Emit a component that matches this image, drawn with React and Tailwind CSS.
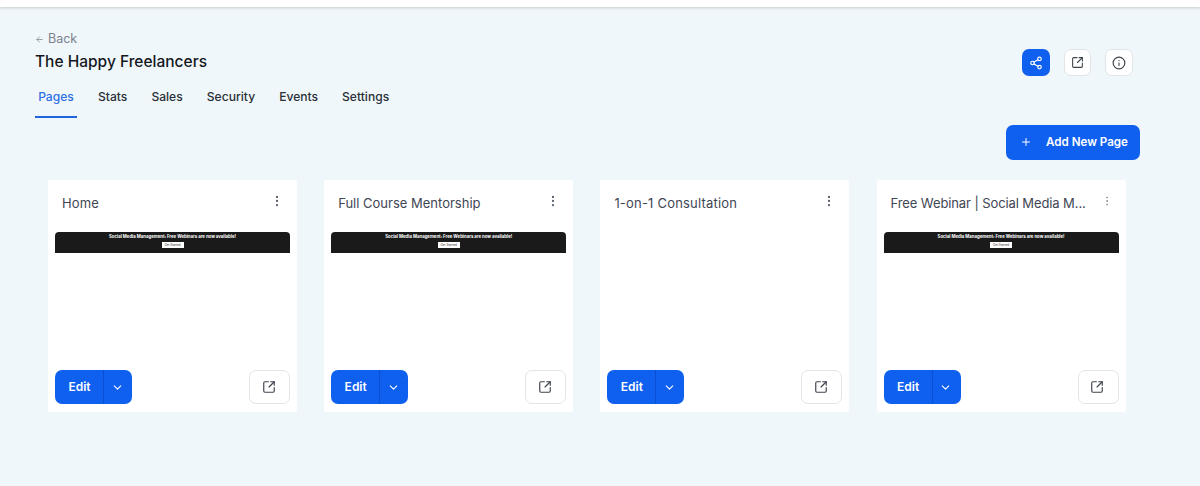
import { ChevronDown, EllipsisVertical, Info, Plus, Share2, SquareArrowOutUpRight, ArrowLeft } from 'lucide-react';

const pages = [
  { id: 1, title: 'Home', preview: true, tracking: 'tracking-[0.1px]' },
  { id: 2, title: 'Full Course Mentorship', preview: true, tracking: 'tracking-normal' },
  { id: 3, title: '1-on-1 Consultation', preview: false, tracking: 'tracking-[0.2px]' },
  { id: 4, title: 'Free Webinar | Social Media M...', preview: true, small: true, tracking: 'tracking-[-0.1px]' },
];

const tabs = ['Stats', 'Sales', 'Security', 'Events', 'Settings'];

function PageCard({ page }) {
  return (
    <div className="w-[249px] h-[232px] bg-white rounded-[3px] flex flex-col px-[7px] pb-[8px]">
      <div className="h-[52px] flex items-start justify-between pl-[7px] pr-[6px] pt-[14px]">
        <span className={`text-[13px] leading-[18px] text-[#3f4654] whitespace-nowrap ${page.tracking}`}>
          {page.title}
        </span>
        {page.small ? (
          <EllipsisVertical className="w-[12px] h-[12px] mt-[1px] text-[#8a9098] shrink-0" strokeWidth={2} />
        ) : (
          <EllipsisVertical className="w-[14px] h-[14px] text-[#5f6672] shrink-0" strokeWidth={2} />
        )}
      </div>
      <div className="flex-1">
        {page.preview && (
          <div className="h-[21px] bg-[#1a1a1a] rounded-t-[4px] flex flex-col items-center pt-[2px]">
            <span className="text-[4.3px] leading-[5px] font-bold text-white whitespace-nowrap">
              Social Media Management: Free Webinars are now available!
            </span>
            <span className="mt-[3px] w-[22px] h-[6px] bg-white text-[3px] leading-[6px] text-center text-[#333]">
              Get Started
            </span>
          </div>
        )}
      </div>
      <div className="flex items-center justify-between">
        <div className="flex w-[77px] h-[34px] rounded-[7px] bg-[#1060f0] text-white">
          <button className="w-[49px] pl-[1px] text-[12px] font-semibold border-r border-[#0b50d0]">Edit</button>
          <button className="flex-1 flex items-center justify-center pr-[2px]">
            <ChevronDown className="w-[13px] h-[13px]" strokeWidth={2} />
          </button>
        </div>
        <button className="w-[41px] h-[34px] rounded-[7px] bg-white border border-[#e2e4e8] flex items-center justify-center pr-[2px]">
          <SquareArrowOutUpRight className="w-[14px] h-[14px] text-[#3f444c]" strokeWidth={2} />
        </button>
      </div>
    </div>
  );
}

export default function App() {
  return (
    <div className="h-[486px] overflow-hidden bg-[#f0f7fb] font-['Inter',sans-serif]">
      <div className="h-[7px] bg-white shadow-[0_1px_3px_rgba(0,0,0,0.18)]" />

      <div className="flex justify-between pl-[35px] pr-[67px] pt-[25px]">
        <div>
          <div className="flex items-center gap-[4px] text-[12.5px] leading-[14px] text-[#7c828c]">
            <ArrowLeft className="w-[9px] h-[9px]" strokeWidth={2} />
            Back
          </div>
          <h1 className="mt-[6px] text-[15.5px] leading-[20px] font-medium text-[#14171c]">The Happy Freelancers</h1>
        </div>
        <div className="flex gap-[14px] mt-[17px]">
          <button className="w-[28px] h-[27px] rounded-[7px] bg-[#1060f0] flex items-center justify-center">
            <Share2 className="w-[14px] h-[14px] text-white" strokeWidth={2} />
          </button>
          <button className="w-[27px] h-[27px] rounded-[7px] bg-white border border-[#e2e4e8] flex items-center justify-center">
            <SquareArrowOutUpRight className="w-[13px] h-[13px] text-[#3f444c]" strokeWidth={2} />
          </button>
          <button className="w-[28px] h-[27px] rounded-[7px] bg-white border border-[#e2e4e8] flex items-center justify-center">
            <Info className="w-[14px] h-[14px] text-[#3f444c]" strokeWidth={2} />
          </button>
        </div>
      </div>

      <div className="flex pl-[35px] mt-[7px] text-[12.1px] leading-[16px] font-medium text-[#2a2f38]">
        <div className="w-[42px] h-[35px] pt-[6px] text-center text-[#2f6fe4] border-b-2 border-[#1f66dc]">Pages</div>
        {tabs.map((tab, i) => (
          <div key={tab} className={i === 0 ? 'ml-[21px] pt-[6px]' : 'ml-[24px] pt-[6px]'}>{tab}</div>
        ))}
      </div>

      <div className="flex justify-end pr-[60px] mt-[7px]">
        <button className="w-[134px] h-[35px] rounded-[7px] bg-[#1060f0] text-white text-[11.6px] font-semibold flex items-center pl-[14px] gap-[14px]">
          <Plus className="w-[12px] h-[12px] -mt-[2px]" strokeWidth={2} />
          Add New Page
        </button>
      </div>

      <div className="flex gap-[27.2px] pl-[48px] mt-[20px]">
        {pages.map((page) => (
          <PageCard key={page.id} page={page} />
        ))}
      </div>
    </div>
  );
}
